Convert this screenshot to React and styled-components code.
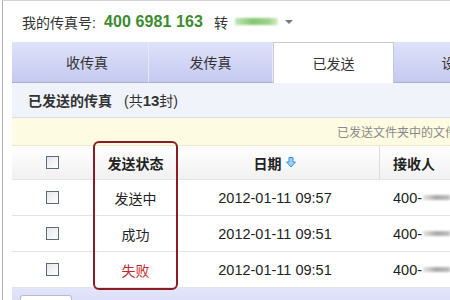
import React from "react";
import styled, { createGlobalStyle } from "styled-components";

const GlobalStyle = createGlobalStyle`
	body {
		margin: 0;
		background: #ffffff;
		font-family: "Liberation Sans", "Noto Sans CJK SC", sans-serif;
		color: #333333;
		overflow: hidden;
	}
`;

const Frame = styled.div`
	width: 448px;
	height: 300px;
	margin-left: 2px;
	border-left: 1px solid #a9aeb8;
	border-top: 1px solid #d4d4d4;
	box-sizing: border-box;
	overflow: hidden;
	display: flex;
	flex-direction: column;
`;

const TopBar = styled.div`
	height: 41px;
	display: flex;
	align-items: center;
	padding-left: 19px;
	font-size: 14px;
	flex-shrink: 0;
`;

const FaxNumber = styled.span`
	margin-left: 8px;
	font-weight: 700;
	font-size: 16px;
	color: #3d8b2f;
	letter-spacing: 0.1px;
`;

const Forward = styled.span`
	margin-left: 11px;
`;

const BlurredGreen = styled.span`
	display: inline-block;
	width: 43px;
	height: 7px;
	margin-left: 7px;
	background: linear-gradient(90deg, #c6e6b8, #86c56e 40%, #9fd48a 80%, #d8efcf);
	filter: blur(1px);
`;

const DropArrow = styled.span`
	display: inline-block;
	margin-left: 7px;
	width: 0;
	height: 0;
	border-left: 4px solid transparent;
	border-right: 4px solid transparent;
	border-top: 4px solid #7a7a7a;
`;

const Content = styled.div`
	margin-left: 9px;
	flex: 1;
	display: flex;
	flex-direction: column;
	position: relative;
`;

const TabBar = styled.div`
	height: 41px;
	display: flex;
	padding-left: 14px;
	background: linear-gradient(#dfe2f9, #c5c9f1);
	border-bottom: 1px solid #aeb2c8;
	box-sizing: border-box;
	flex-shrink: 0;
`;

const Tab = styled.div`
	width: ${(p) => p.$w}px;
	flex-shrink: 0;
	display: flex;
	align-items: center;
	justify-content: center;
	font-size: 14px;
	color: #333;
	border-right: 1px solid ${(p) => (p.$active ? "#c8c8d0" : "#e7e9fb")};
	box-sizing: border-box;
	${(p) =>
		p.$active &&
		`
		background: #ffffff;
		border-left: 1px solid #c8c8d0;
		border-top: 1px solid #c8c8d0;
		margin-bottom: -1px;
		height: 41px;
	`}
`;

const SectionHead = styled.div`
	height: 35px;
	display: flex;
	align-items: center;
	padding-left: 16px;
	background: #f1f3fb;
	border-bottom: 1px solid #dcdde6;
	box-sizing: border-box;
	font-size: 14px;
	flex-shrink: 0;
`;

const SectionTitle = styled.span`
	font-weight: 700;
`;

const Count = styled.span`
	margin-left: 12px;
	b {
		font-size: 15px;
	}
`;

const Notice = styled.div`
	height: 28px;
	display: flex;
	align-items: center;
	padding-left: 325px;
	background: #fdfbe1;
	border-bottom: 1px solid #ece8c8;
	box-sizing: border-box;
	font-size: 12px;
	color: #8a8a8a;
	white-space: nowrap;
	overflow: hidden;
	flex-shrink: 0;
`;

const Table = styled.div`
	position: relative;
	display: flex;
	flex-direction: column;
`;

const Row = styled.div`
	display: grid;
	grid-template-columns: 81px 85px 202px 1fr;
	height: ${(p) => (p.$head ? 34 : 36)}px;
	border-bottom: 1px solid #e3e3e3;
	box-sizing: border-box;
	background: ${(p) => (p.$head ? "linear-gradient(#ffffff, #f1f1f1)" : "#ffffff")};
	font-size: 14px;
	font-weight: ${(p) => (p.$head ? 700 : 400)};
	color: #222;
`;

const Cell = styled.div`
	display: flex;
	align-items: center;
	justify-content: ${(p) => (p.$left ? "flex-start" : "center")};
	padding-left: ${(p) => (p.$left ? 13 : 0)}px;
	padding-right: ${(p) => p.$pr || 0}px;
	border-right: ${(p) => (p.$sep ? "1px solid #dcdcdc" : "none")};
	color: ${(p) => p.$color || "inherit"};
	font-size: ${(p) => p.$size || 14}px;
	white-space: nowrap;
	overflow: hidden;
`;

const Check = styled.span`
	width: 11px;
	height: 11px;
	border: 1px solid #5f6c78;
	background: linear-gradient(135deg, #e4e7ea, #ffffff);
	display: inline-block;
`;

const BlurGray = styled.span`
	display: inline-block;
	width: 70px;
	height: 5px;
	margin-left: 1px;
	background: linear-gradient(90deg, #e4e4e4, #a8a8a8 50%, #bdbdbd);
	filter: blur(1px);
`;

const Highlight = styled.div`
	position: absolute;
	left: 81px;
	top: -5px;
	width: 85px;
	height: 149px;
	border: 2px solid #8a1c24;
	border-radius: 6px;
	box-sizing: border-box;
	pointer-events: none;
`;

const BottomBar = styled.div`
	flex: 1;
	background: linear-gradient(#e3e5fa, #d3d6f5);
	padding: 7px 0 0 8px;
`;

const SmallButton = styled.div`
	width: 52px;
	height: 20px;
	background: #ffffff;
	border: 1px solid #b8bbc8;
	border-radius: 3px;
	box-sizing: border-box;
`;

const SortIcon = () => (
	<svg width="10" height="11" viewBox="0 0 10 11" style={{ marginLeft: 4 }}>
		<path d="M3 0.5h4v4.5h2.5L5 10 0.5 5H3z" fill="#9fd0f3" stroke="#3a95d8" strokeWidth="1" />
	</svg>
);

const rows = [
	{ status: "发送中", date: "2012-01-11 09:57" },
	{ status: "成功", date: "2012-01-11 09:51" },
	{ status: "失败", date: "2012-01-11 09:51", color: "#c0272d" },
];

export default function App() {
	return (
		<>
			<GlobalStyle />
			<Frame>
				<TopBar>
					我的传真号:
					<FaxNumber>400 6981 163</FaxNumber>
					<Forward>转</Forward>
					<BlurredGreen />
					<DropArrow />
				</TopBar>
				<Content>
					<TabBar>
						<Tab $w={123}>收传真</Tab>
						<Tab $w={124}>发传真</Tab>
						<Tab $w={121} $active>
							已发送
						</Tab>
						<Tab $w={124}>设置</Tab>
					</TabBar>
					<SectionHead>
						<SectionTitle>已发送的传真</SectionTitle>
						<Count>
							(共<b>13</b>封)
						</Count>
					</SectionHead>
					<Notice>已发送文件夹中的文件将保存30天</Notice>
					<Table>
						<Row $head>
							<Cell>
								<Check />
							</Cell>
							<Cell>发送状态</Cell>
							<Cell $sep $pr={8}>
								日期
								<SortIcon />
							</Cell>
							<Cell $left>接收人</Cell>
						</Row>
						{rows.map((r, i) => (
							<Row key={i}>
								<Cell>
									<Check />
								</Cell>
								<Cell $color={r.color}>{r.status}</Cell>
								<Cell $pr={8} $size={14.5}>
									{r.date}
								</Cell>
								<Cell $left $size={14.5}>
									400-
									<BlurGray />
								</Cell>
							</Row>
						))}
						<Highlight />
					</Table>
					<BottomBar>
						<SmallButton />
					</BottomBar>
				</Content>
			</Frame>
		</>
	);
}
